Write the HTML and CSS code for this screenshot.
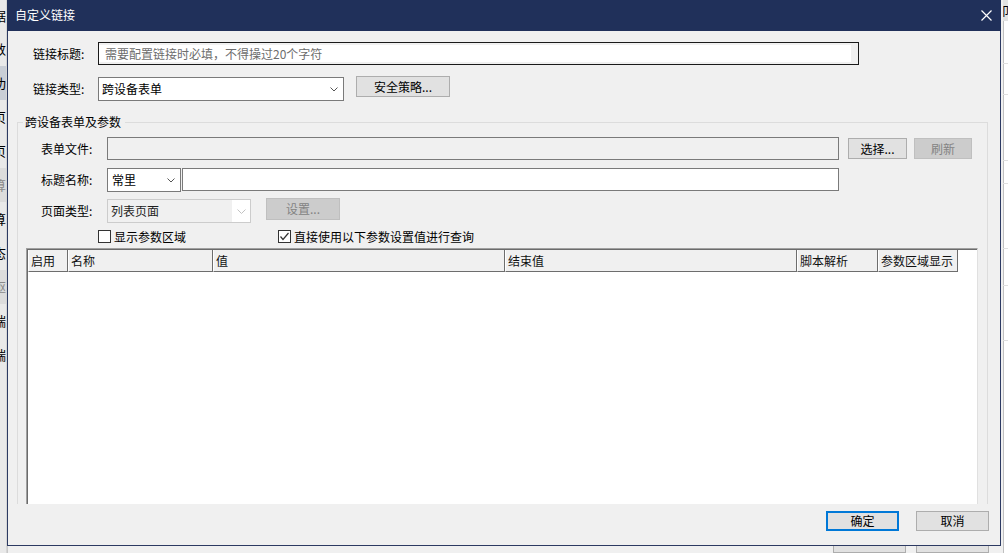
FILE: index.html
```html
<!DOCTYPE html>
<html lang="zh-CN">
<head>
<meta charset="utf-8">
<title>自定义链接</title>
<link rel="stylesheet" href="styles.css">
</head>
<body>
<div class="desktop">
  <div class="left-strip">
    <div class="ls-item">数据</div>
    <div class="ls-item">参数</div>
    <div class="ls-item hl">成功</div>
    <div class="ls-item">首页</div>
    <div class="ls-item">分页</div>
    <div class="ls-item dim">计算</div>
    <div class="ls-item">计算</div>
    <div class="ls-item">状态</div>
    <div class="ls-item dim">驱</div>
    <div class="ls-item">终端</div>
    <div class="ls-item">终端</div>
  </div>

  <div class="center">
    <div class="dialog">
      <div class="titlebar">
        <span class="title-text">自定义链接</span>
        <svg class="close" width="11" height="11" viewBox="0 0 11 11"><path d="M0.5 0.5 L10.5 10.5 M10.5 0.5 L0.5 10.5" stroke="#ffffff" stroke-width="1.2" fill="none"/></svg>
      </div>

      <div class="row row1">
        <span class="label1">链接标题:</span>
        <div class="title-input"><div class="ti-inner">需要配置链接时必填，不得操过20个字符</div></div>
      </div>

      <div class="row row2">
        <span class="label1">链接类型:</span>
        <div class="select sel-type"><span>跨设备表单</span>
          <svg class="chev" width="8" height="5" viewBox="0 0 8 5"><polyline points="0.5,0.5 4,4 7.5,0.5" stroke="#555" fill="none"/></svg>
        </div>
        <div class="btn btn-sec">安全策略...</div>
      </div>

      <div class="group">
        <div class="legend">跨设备表单及参数</div>

        <div class="g-row rowA">
          <span class="label2">表单文件:</span>
          <div class="file-input"></div>
          <div class="btn btn-choose">选择...</div>
          <div class="btn btn-disabled btn-refresh">刷新</div>
        </div>

        <div class="g-row rowB">
          <span class="label2">标题名称:</span>
          <div class="select sel-const"><span>常里</span>
            <svg class="chev" width="8" height="5" viewBox="0 0 8 5"><polyline points="0.5,0.5 4,4 7.5,0.5" stroke="#555" fill="none"/></svg>
          </div>
          <div class="text-input"></div>
        </div>

        <div class="g-row rowC">
          <span class="label2">页面类型:</span>
          <div class="sel-disabled">
            <div class="sd-text">列表页面</div>
            <svg class="chev" width="9" height="5" viewBox="0 0 9 5"><polyline points="0.5,0.5 4.5,4.5 8.5,0.5" stroke="#c2c2c2" fill="none"/></svg>
          </div>
          <div class="btn btn-disabled btn-set">设置...</div>
        </div>

        <div class="checks">
          <div class="check-item first">
            <span class="box"></span><span class="check-label">显示参数区域</span>
          </div>
          <div class="check-item">
            <span class="box"><svg width="11" height="11" viewBox="0 0 11 11"><polyline points="1.5,5.5 4,8.5 9.5,2" stroke="#333" stroke-width="1.2" fill="none"/></svg></span><span class="check-label">直接使用以下参数设置值进行查询</span>
          </div>
        </div>

        <div class="table">
          <div class="table-inner">
            <div class="thead">
              <div class="th w1">启用</div>
              <div class="th w2">名称</div>
              <div class="th w3">值</div>
              <div class="th w3">结束值</div>
              <div class="th w5">脚本解析</div>
              <div class="th w6">参数区域显示</div>
            </div>
          </div>
        </div>
      </div>

      <div class="footer">
        <div class="btn btn-ok">确定</div>
        <div class="btn btn-cancel">取消</div>
      </div>
    </div>
    <div class="under">
      <div class="ghost-btn"></div>
      <div class="ghost-btn"></div>
    </div>
  </div>

  <div class="right-strip">
    <div class="rs-top">印</div>
    <div class="rs-line l1"></div>
    <div class="rs-line l2"></div>
    <div class="rs-line l3"></div>
    <div class="rs-line l4"></div>
    <div class="rs-line l5"></div>
    <div class="rs-line l6"></div>
    <div class="rs-line l7"></div>
  </div>
</div>
</body>
</html>
```

FILE: styles.css
```css
* { box-sizing: border-box; }

html, body {
  margin: 0;
  padding: 0;
}

body {
  width: 1008px;
  height: 553px;
  overflow: hidden;
  background: #f0f0f0;
  font-family: "Noto Sans CJK SC", "Microsoft YaHei", sans-serif;
  font-size: 12px;
  line-height: 16px;
  color: #000;
}

.desktop {
  display: flex;
  width: 1008px;
  height: 553px;
}

/* left background strip */
.left-strip {
  width: 7px;
  flex: none;
  background: #e9e9e9;
  border-right: 1px solid #d6d6d6;
  display: flex;
  flex-direction: column;
  overflow: hidden;
}

.ls-item {
  height: 34px;
  line-height: 34px;
  display: flex;
  justify-content: flex-end;
  white-space: nowrap;
  overflow: hidden;
  flex: none;
  font-size: 13px;
}

.ls-item:first-child {
  height: 32px;
  line-height: 32px;
}

.ls-item.hl { background: #c9ced6; }
.ls-item.dim { background: #dcdcdc; color: #8a8a8a; }

/* center column */
.center {
  width: 994px;
  flex: none;
  display: flex;
  flex-direction: column;
}

.dialog {
  height: 546px;
  flex: none;
  background: #f0f0f0;
  border: 1px solid #2c3a62;
  border-top: none;
  display: flex;
  flex-direction: column;
}

.titlebar {
  height: 31px;
  flex: none;
  background: #20305a;
  color: #ffffff;
  display: flex;
  align-items: center;
  justify-content: space-between;
  padding: 0 9px 2px 8px;
  margin: 0 -1px;
}

.title-text {
  font-size: 12px;
}

.close { display: block; margin-top: 1px; }

.row {
  display: flex;
  margin-left: 25px;
}

.row1 {
  margin-top: 11px;
  height: 23px;
  align-items: center;
}

.row2 {
  margin-top: 11px;
  height: 25px;
  align-items: flex-start;
}

.label1 {
  width: 65px;
  flex: none;
}

.row2 .label1 { line-height: 25px; }

.title-input {
  width: 761px;
  height: 23px;
  border: 1px solid #1a1a1a;
  background: #f0f0f0;
  padding: 2px 7px 2px 0;
}

.ti-inner {
  height: 100%;
  background: #ffffff;
  color: #6d6d6d;
  padding-left: 6px;
  line-height: 17px;
}

.select {
  background: #ffffff;
  border: 1px solid #7a7a7a;
  display: flex;
  align-items: center;
  justify-content: space-between;
}

.chev { display: block; flex: none; }

.sel-type {
  width: 246px;
  height: 24px;
  margin-top: 1px;
  padding: 0 5px 0 3px;
}

.btn {
  background: #e1e1e1;
  border: 1px solid #adadad;
  display: flex;
  align-items: center;
  justify-content: center;
  flex: none;
}

.btn-sec {
  margin-left: 12px;
  width: 94px;
  height: 21px;
}

/* group box */
.group {
  margin: 21px 0 0 9px;
  width: 971px;
  border: 1px solid #dcdcdc;
  border-bottom: none;
  display: flex;
  flex-direction: column;
}

.legend {
  width: max-content;
  margin: -9px 0 0 5px;
  padding: 0 4px 0 2px;
  height: 16px;
  line-height: 16px;
  background: #f0f0f0;
}

.g-row {
  display: flex;
  margin-left: 23px;
  align-items: flex-start;
}

.label2 {
  width: 66px;
  flex: none;
  line-height: 23px;
}

.rowA {
  margin-top: 7px;
  height: 23px;
}

.file-input {
  width: 732px;
  height: 23px;
  border: 1px solid #7a7a7a;
  background: #f0f0f0;
  flex: none;
}

.btn-choose {
  margin: 1px 0 0 9px;
  width: 59px;
  height: 21px;
}

.btn-disabled {
  background: #cccccc;
  border-color: #bfbfbf;
  color: #838383;
}

.btn-refresh {
  margin: 1px 0 0 7px;
  width: 58px;
  height: 21px;
}

.rowB {
  margin-top: 8px;
  height: 24px;
}

.rowB .label2 { line-height: 24px; }

.sel-const {
  width: 74px;
  height: 24px;
  padding: 0 5px 0 4px;
  flex: none;
}

.text-input {
  margin-left: 1px;
  width: 657px;
  height: 23px;
  border: 1px solid #7a7a7a;
  background: #ffffff;
  flex: none;
}

.rowC {
  margin-top: 6px;
  height: 25px;
}

.rowC .label2 { line-height: 25px; margin-top: 0; }

.sel-disabled {
  margin-top: 1px;
  width: 144px;
  height: 24px;
  border: 1px solid #cccccc;
  background: #ffffff;
  display: flex;
  align-items: center;
  flex: none;
}

.sd-text {
  width: 124px;
  height: 100%;
  background: #f0f0f0;
  padding-left: 3px;
  line-height: 22px;
  color: #1e1e1e;
}

.sel-disabled .chev { margin-left: 5px; }

.btn-set {
  margin-left: 15px;
  width: 74px;
  height: 22px;
}

.checks {
  display: flex;
  margin: 6px 0 0 80px;
  height: 16px;
  align-items: flex-start;
}

.check-item {
  display: flex;
  align-items: flex-start;
}

.check-item.first { width: 180px; }

.box {
  width: 13px;
  height: 13px;
  margin-top: 1px;
  border: 1px solid #333333;
  background: #ffffff;
  flex: none;
  display: flex;
  align-items: center;
  justify-content: center;
}

.box svg { display: block; }

.check-label { margin-left: 3px; }

/* table */
.table {
  margin: 3px 0 0 8px;
  width: 952px;
  height: 256px;
  border-top: 1px solid #a0a0a0;
  border-left: 1px solid #a0a0a0;
  border-right: 1px solid #e0e0e0;
  background: #ffffff;
}

.table-inner {
  height: 100%;
  border-top: 1px solid #6b6b6b;
  border-left: 1px solid #6b6b6b;
  background: #ffffff;
}

.thead {
  display: flex;
  height: 22px;
}

.th {
  height: 22px;
  background: #f0f0f0;
  border-left: 1px solid #ffffff;
  border-right: 1px solid #6d6d6d;
  border-bottom: 1px solid #6d6d6d;
  padding-left: 2px;
  line-height: 21px;
  flex: none;
  color: #111;
}

.w1 { width: 40px; }
.w2 { width: 145px; }
.w3 { width: 292px; }
.w5 { width: 81px; }
.w6 { width: 80px; }

/* footer buttons */
.footer {
  display: flex;
  justify-content: flex-end;
  margin-top: 7px;
  padding-right: 11px;
  gap: 17px;
}

.btn-ok, .btn-cancel {
  width: 73px;
  height: 20px;
}

.btn-ok {
  border: 2px solid #0078d7;
}

/* below the dialog */
.under {
  flex: 1;
  background: #f0f0f0;
  display: flex;
  justify-content: flex-end;
  padding-right: 12px;
  gap: 10px;
  border-left: 1px solid #c8c8c8;
}

.ghost-btn {
  width: 73px;
  height: 7px;
  background: #e1e1e1;
  border: 1px solid #adadad;
  border-top: none;
}

/* right strip */
.right-strip {
  width: 7px;
  flex: none;
  background: #ffffff;
  border-left: 2px solid #f0f0f0;
  box-shadow: inset 1px 0 0 #c0c0c0;
  display: flex;
  flex-direction: column;
  overflow: hidden;
}

.rs-top {
  height: 21px;
  line-height: 21px;
  background: #e2e2e2;
  white-space: nowrap;
  overflow: hidden;
  font-size: 12px;
  text-indent: -6px;
}

.rs-line {
  height: 1px;
  background: #e0e0e0;
}

.l1 { margin-top: 42px; }
.l2 { margin-top: 30px; }
.l3 { margin-top: 65px; }
.l4 { margin-top: 22px; }
.l5 { margin-top: 64px; }
.l6 { margin-top: 36px; }
.l7 { margin-top: 54px; }
```
